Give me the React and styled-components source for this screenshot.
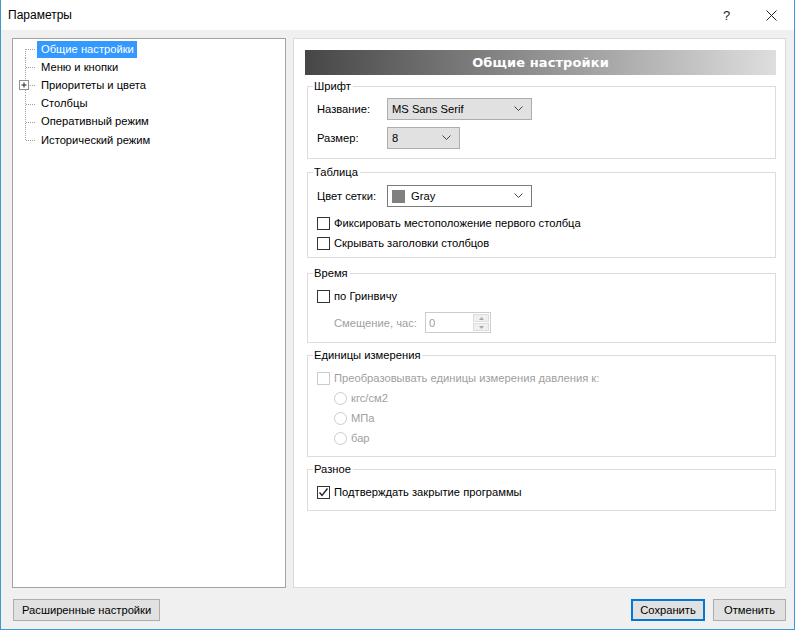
import React from 'react';
import styled, { createGlobalStyle } from 'styled-components';

const GlobalStyle = createGlobalStyle`
  html, body {
    margin: 0;
    padding: 0;
    background: #ffffff;
  }

  body {
    font-family: "Liberation Sans", Arial, sans-serif;
    font-size: 11.2px;
    color: #000000;
  }
`;

const Window = styled.div`
  width: 795px;
  height: 630px;
  box-sizing: border-box;
  border: 1px solid #3d98d4;
  border-top: 0;
  background: #f0f0f0;
  display: flex;
  flex-direction: column;
`;

const TitleBar = styled.div`
  height: 30px;
  flex: none;
  background: #ffffff;
  display: flex;
  align-items: center;
  padding-left: 7px;
`;

const Title = styled.div`
  flex: 1;
  font-size: 12px;
`;

const TitleButton = styled.div`
  width: 45px;
  height: 30px;
  display: flex;
  align-items: center;
  justify-content: center;
  font-size: 13px;
  color: #222;
`;

const Body = styled.div`
  flex: 1;
  display: flex;
  flex-direction: column;
  padding: 8px 8px 0 11px;
  min-height: 0;
`;

const Main = styled.div`
  flex: 1;
  display: flex;
  gap: 7px;
  min-height: 0;
`;

const TreePanel = styled.div`
  width: 274px;
  box-sizing: border-box;
  background: #ffffff;
  border: 1px solid #a3a3a3;
  padding-top: 1px;
  display: flex;
  flex-direction: column;
`;

const TreeRow = styled.div`
  height: 18.2px;
  display: flex;
  align-items: center;
`;

const TreeLabel = styled.span`
  padding: 1px 3px 2px 4px;
  line-height: 14px;
  background: ${({ selected }) => (selected ? '#3399ff' : 'transparent')};
  color: ${({ selected }) => (selected ? '#ffffff' : '#000000')};
`;

const SettingsPanel = styled.div`
  flex: 1;
  box-sizing: border-box;
  background: #ffffff;
  border: 1px solid #dadada;
  padding: 11px 9px 0 11px;
  display: flex;
  flex-direction: column;
`;

const Banner = styled.div`
  height: 25px;
  background: linear-gradient(to right, #464646 0%, #8a8a8a 45%, #dedede 100%);
  color: #ffffff;
  font-family: "DejaVu Sans", Verdana, sans-serif;
  font-weight: bold;
  font-size: 13px;
  letter-spacing: 0.1px;
  display: flex;
  align-items: center;
  justify-content: center;
  margin-bottom: 4px;
`;

const Group = styled.fieldset`
  margin: ${({ gap }) => gap ?? 6}px 0 0 2px;
  border: 1px solid #dcdcdc;
  padding: 0 8px ${({ bottom }) => bottom ?? 8}px 9px;
  min-width: 0;
`;

const Legend = styled.legend`
  padding: 0 2px 0 1px;
  margin-left: -4px;
  line-height: 14px;
`;

const GroupBody = styled.div`
  display: flex;
  flex-direction: column;
  gap: ${({ gap }) => gap ?? 0}px;
  padding-top: ${({ top }) => top ?? 6}px;
`;

const FieldRow = styled.div`
  display: flex;
  align-items: center;
  height: ${({ h }) => h || 22}px;
  padding-left: ${({ indent }) => indent || 0}px;
`;

const FieldLabel = styled.span`
  width: ${({ w }) => w || 70}px;
  flex: none;
  color: ${({ disabled }) => (disabled ? '#a0a0a0' : '#000000')};
`;

const Combo = styled.div`
  width: ${({ w }) => w}px;
  height: 22px;
  box-sizing: border-box;
  border: 1px solid ${({ white }) => (white ? '#7a7a7a' : '#adadad')};
  background: ${({ white }) => (white ? '#ffffff' : '#e1e1e1')};
  display: flex;
  align-items: center;
  padding: 0 8px 0 4px;
  gap: 6px;
`;

const ComboText = styled.span`
  flex: 1;
`;

const Swatch = styled.span`
  width: 13px;
  height: 13px;
  background: #808080;
`;

const CheckRow = styled.label`
  display: flex;
  align-items: center;
  height: 20px;
  gap: 4px;
  padding-left: ${({ indent }) => indent || 0}px;
  color: ${({ disabled }) => (disabled ? '#a0a0a0' : '#000000')};
`;

const Box = styled.span`
  width: 13px;
  height: 13px;
  box-sizing: border-box;
  border: 1px solid ${({ disabled }) => (disabled ? '#cccccc' : '#333333')};
  background: #ffffff;
  display: flex;
  align-items: center;
  justify-content: center;
  flex: none;
`;

const Radio = styled.span`
  width: 13px;
  height: 13px;
  box-sizing: border-box;
  border-radius: 50%;
  border: 1px solid #cccccc;
  background: #ffffff;
  flex: none;
`;

const Spin = styled.div`
  width: 66px;
  height: 21px;
  box-sizing: border-box;
  border: 1px solid #cccccc;
  background: #ffffff;
  display: flex;
  align-items: stretch;
  color: #a0a0a0;
`;

const SpinValue = styled.span`
  flex: 1;
  display: flex;
  align-items: center;
  padding-left: 3px;
`;

const SpinButtons = styled.div`
  width: 16px;
  display: flex;
  flex-direction: column;
  padding: 1px 1px 1px 0;
  gap: 1px;
`;

const SpinButton = styled.div`
  flex: 1;
  background: #f0f0f0;
  border: 1px solid #dcdcdc;
  display: flex;
  align-items: center;
  justify-content: center;
`;

const Footer = styled.div`
  height: 41px;
  flex: none;
  display: flex;
  align-items: flex-start;
  padding: 11px 0 0 1px;
  box-sizing: border-box;
  gap: 8px;
`;

const Button = styled.button`
  height: 22px;
  min-width: ${({ w }) => w || 75}px;
  box-sizing: border-box;
  padding: 0 8px;
  font-family: inherit;
  font-size: 11.2px;
  color: #000;
  background: #e1e1e1;
  border: 1px solid ${({ primary }) => (primary ? '#0078d7' : '#adadad')};
  box-shadow: ${({ primary }) => (primary ? 'inset 0 0 0 1px #0078d7' : 'none')};
  margin-left: ${({ push }) => (push ? 'auto' : '0')};
`;

const Chevron = () => (
  <svg width="9" height="6" viewBox="0 0 9 6">
    <polyline points="0.5,0.5 4.5,4.5 8.5,0.5" fill="none" stroke="#444" strokeWidth="1" />
  </svg>
);

const Tick = () => (
  <svg width="11" height="11" viewBox="0 0 11 11">
    <polyline points="1.5,5.5 4,8.5 9.5,1.5" fill="none" stroke="#222" strokeWidth="1.4" />
  </svg>
);

const Connector = ({ first, last, expander }) => (
  <svg width="24" height="18" viewBox="0 0 24 18">
    <line
      x1="12.5"
      y1={first ? 9 : 0}
      x2="12.5"
      y2={last ? 9 : 18}
      stroke="#a0a0a0"
      strokeDasharray="1 1"
    />
    <line x1="13" y1="9.5" x2="23" y2="9.5" stroke="#a0a0a0" strokeDasharray="1 1" />
    {expander && (
      <g>
        <rect x="6.5" y="4.5" width="9" height="9" fill="#fff" stroke="#919191" />
        <line x1="8.5" y1="9" x2="13.5" y2="9" stroke="#222" />
        <line x1="11" y1="6.5" x2="11" y2="11.5" stroke="#222" />
      </g>
    )}
  </svg>
);

const treeItems = [
  { name: 'Общие настройки', selected: true },
  { name: 'Меню и кнопки' },
  { name: 'Приоритеты и цвета', expander: true },
  { name: 'Столбцы' },
  { name: 'Оперативный режим' },
  { name: 'Исторический режим' },
];

const Check = ({ checked, disabled, children, indent }) => (
  <CheckRow disabled={disabled} indent={indent}>
    <Box disabled={disabled}>{checked && <Tick />}</Box>
    {children}
  </CheckRow>
);

const RadioOption = ({ children }) => (
  <CheckRow disabled indent={17}>
    <Radio />
    {children}
  </CheckRow>
);

export default function App() {
  return (
    <>
      <GlobalStyle />
      <Window>
        <TitleBar>
          <Title>Параметры</Title>
          <TitleButton>?</TitleButton>
          <TitleButton>
            <svg width="11" height="11" viewBox="0 0 11 11">
              <path d="M0.5 0.5 L10.5 10.5 M10.5 0.5 L0.5 10.5" stroke="#222" strokeWidth="1" />
            </svg>
          </TitleButton>
        </TitleBar>
        <Body>
          <Main>
            <TreePanel>
              {treeItems.map((item, i) => (
                <TreeRow key={item.name}>
                  <Connector
                    first={i === 0}
                    last={i === treeItems.length - 1}
                    expander={item.expander}
                  />
                  <TreeLabel selected={item.selected}>{item.name}</TreeLabel>
                </TreeRow>
              ))}
            </TreePanel>

            <SettingsPanel>
              <Banner>Общие настройки</Banner>

              <Group gap={0} bottom={9}>
                <Legend>Шрифт</Legend>
                <GroupBody top={5} gap={7}>
                  <FieldRow>
                    <FieldLabel>Название:</FieldLabel>
                    <Combo w={145}>
                      <ComboText>MS Sans Serif</ComboText>
                      <Chevron />
                    </Combo>
                  </FieldRow>
                  <FieldRow>
                    <FieldLabel>Размер:</FieldLabel>
                    <Combo w={73}>
                      <ComboText>8</ComboText>
                      <Chevron />
                    </Combo>
                  </FieldRow>
                </GroupBody>
              </Group>

              <Group bottom={4}>
                <Legend>Таблица</Legend>
                <GroupBody top={6}>
                  <FieldRow>
                    <FieldLabel>Цвет сетки:</FieldLabel>
                    <Combo w={145} white>
                      <Swatch />
                      <ComboText>Gray</ComboText>
                      <Chevron />
                    </Combo>
                  </FieldRow>
                  <div style={{ height: 6 }} />
                  <Check>Фиксировать местоположение первого столбца</Check>
                  <Check>Скрывать заголовки столбцов</Check>
                </GroupBody>
              </Group>

              <Group gap={8} bottom={9}>
                <Legend>Время</Legend>
                <GroupBody top={6} gap={6}>
                  <Check>по Гринвичу</Check>
                  <FieldRow h={21} indent={17}>
                    <FieldLabel w={91} disabled>Смещение, час:</FieldLabel>
                    <Spin>
                      <SpinValue>0</SpinValue>
                      <SpinButtons>
                        <SpinButton>
                          <svg width="5" height="3" viewBox="0 0 5 3">
                            <polygon points="0,3 2.5,0 5,3" fill="#a8a8a8" />
                          </svg>
                        </SpinButton>
                        <SpinButton>
                          <svg width="5" height="3" viewBox="0 0 5 3">
                            <polygon points="0,0 2.5,3 5,0" fill="#a8a8a8" />
                          </svg>
                        </SpinButton>
                      </SpinButtons>
                    </Spin>
                  </FieldRow>
                </GroupBody>
              </Group>

              <Group gap={5} bottom={8}>
                <Legend>Единицы измерения</Legend>
                <GroupBody top={6}>
                  <Check disabled>Преобразовывать единицы измерения давления к:</Check>
                  <RadioOption>кгс/см2</RadioOption>
                  <RadioOption>МПа</RadioOption>
                  <RadioOption>бар</RadioOption>
                </GroupBody>
              </Group>

              <Group gap={5} bottom={8}>
                <Legend>Разное</Legend>
                <GroupBody top={6}>
                  <Check checked>Подтверждать закрытие программы</Check>
                </GroupBody>
              </Group>
            </SettingsPanel>
          </Main>

          <Footer>
            <Button>Расширенные настройки</Button>
            <Button push primary w={74}>Сохранить</Button>
            <Button w={73}>Отменить</Button>
          </Footer>
        </Body>
      </Window>
    </>
  );
}
